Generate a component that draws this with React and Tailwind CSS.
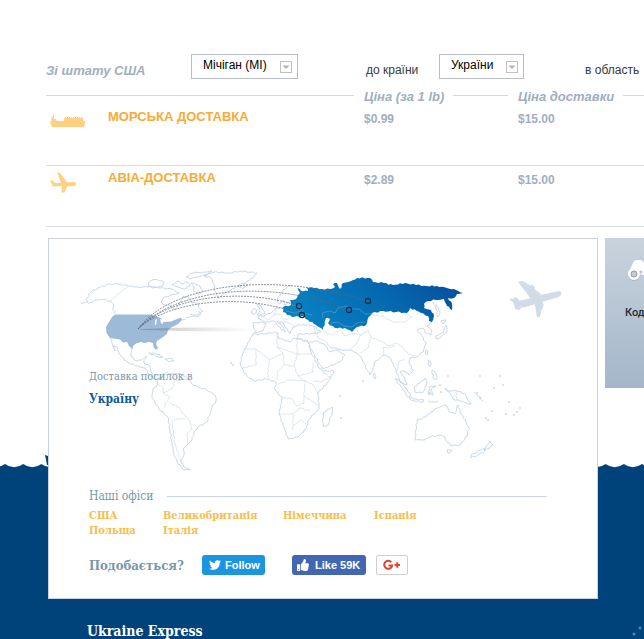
import React from "react";
import { FaTwitter, FaThumbsUp } from "react-icons/fa";

const SLAB = "font-['DejaVu_Serif_Condensed','DejaVu_Serif',serif]";

// Turns a rough list of x,y pairs into a slightly ragged coastline
function coast(str, amp = 1, close = true) {
  const n = str.trim().split(/[\s,]+/).map(Number);
  const pts = [];
  for (let i = 0; i < n.length; i += 2) pts.push([n[i], n[i + 1]]);
  if (close) pts.push(pts[0]);
  let d = `M${pts[0][0]} ${pts[0][1]}`;
  for (let i = 1; i < pts.length; i++) {
    const [ax, ay] = pts[i - 1];
    const [bx, by] = pts[i];
    const len = Math.hypot(bx - ax, by - ay) || 1;
    const steps = Math.max(1, Math.round(len / 2.5));
    for (let s = 1; s < steps; s++) {
      const t = s / steps;
      const off = Math.sin(ax * 12.9 + by * 7.3 + s * 2.4) * amp;
      const x = ax + (bx - ax) * t - ((by - ay) / len) * off;
      const y = ay + (by - ay) * t + ((bx - ax) / len) * off;
      d += `L${x.toFixed(1)} ${y.toFixed(1)}`;
    }
    d += `L${bx} ${by}`;
  }
  return d + (close ? "Z" : "");
}

// closed shores
const LAND = [
  // Greenland
  "214,272 230,273 240,271 257,273 253,278 247,281 243,285 235,288 225,293 218,298 215,291 214,284 211,278 204,276",
  // Arctic islands
  "148,283 152,280 158,280 164,282 163,286 155,287 149,286",
  "172,285 177,281 183,284 188,282 190,286 184,289 178,287",
  "186,277 193,273 204,272 212,271 206,275 197,277 190,279",
  "191,283 198,285 203,290 199,294 193,291 194,287",
  // Iceland
  "239,285 244,283 248,285 244,288 240,287",
  // Cuba, Hispaniola
  "149,353 155,353 163,357 158,357",
  "165,359 170,358 174,361 169,362",
  // South America
  "158,379 165,373 172,374 180,373 187,378 192,384 198,387 207,390 215,395 216,401 212,407 210,413 207,422 198,427 194,433 192,440 187,445 183,449 184,455 181,460 183,466 190,470 183,469 177,462 174,454 172,445 170,430 168,417 159,409 152,398 153,390 157,385",
  // Africa
  "253,334 263,334 277,332 278,338 290,342 295,338 308,342 311,352 318,366 322,371 334,371 329,381 318,393 319,409 309,419 306,429 298,437 288,439 285,430 279,414 282,398 275,390 276,382 267,379 253,381 244,373 240,363 243,353 246,347",
  "332,407 332,413 328,425 323,426 323,419 323,413",
  // Arabia
  "308,343 315,341 324,344 330,352 337,350 345,355 340,362 323,369 318,362 313,352",
  // Great Britain and Ireland
  "257,304 261,306 265,314 257,315 260,310",
  "252,310 256,309 256,313 252,314",
  // Iberia
  "253,323 260,322 266,324 263,331 255,333",
  // Sumatra, Java, Borneo, Sulawesi
  "395,379 399,380 406,388 411,396 408,397 402,388",
  "409,398 416,399 424,400 423,402 414,401",
  "414,387 420,383 425,378 427,383 425,389 422,393 415,392",
  "429,387 436,386 431,389 433,395 430,392 429,395",
  // Philippines, Taiwan
  "428,360 431,362 430,367 428,365",
  "432,370 436,374 437,379 433,378",
  "426,350 428,351 427,355 425,353",
  // New Guinea
  "445,388 449,391 455,390 465,394 467,399 471,404 466,403 460,401 453,399 451,395",
  // Australia
  "458,405 460,412 463,416 466,422 469,427 467,436 460,445 452,446 447,442 445,437 440,435 430,437 423,440 415,440 416,430 417,420 426,417 431,412 437,408 446,405 449,411 455,414",
  "447,450 452,450 450,453 448,453",
  // New Zealand
  "490,441 493,445 488,449 484,450",
  "484,448 485,451 478,455 471,458 471,455",
  // Japan
  "441,321 446,320 443,324",
  "446,325 447,331 441,337 436,339 436,336 443,333",
  "374,373 376,376 375,379 373,376",
];

// open shores
const SHORES = [
  "81,304 88,302 86,299 91,292 98,288 110,284 119,284 128,286 138,287 148,287 160,288 172,289 179,293 171,295 163,298 161,302 165,305 170,305 175,310 178,305 181,302 183,296 189,298 192,303 197,303 200,309 203,311 197,315 190,317 182,320",
  "88,304 94,301 101,299 110,301 114,305 113,308 115,314",
  "190,314 194,316 198,317 201,314 198,311",
  "110,338 112,343 115,351 113,346 117,347 120,355 128,363 138,366 146,369 150,376 156,380 160,378",
  "132,348 131,356 136,361 142,360 146,356 144,363 150,366 151,372 157,377",
  "292,285 287,287 282,292 278,297 277,302 280,304 284,300 284,305 290,302",
  "284,308 276,308 272,312 266,315 258,317 264,322 270,322 274,321 278,326 285,332 283,327 277,321 283,323 288,331 290,334 293,327 303,324 313,326 321,332 311,334 298,334 297,338 308,341",
  "330,347 337,349 345,350 353,351 357,353 362,359 366,368 370,375 373,370 374,363 384,355 389,357 393,363 396,371 401,382 407,385 405,379 400,372 404,371 409,375 413,370 409,362 410,358 417,357 423,352 426,344 422,336 417,330 423,328 425,332 431,335 432,331 427,326 432,322",
  "433,302 436,309 438,317 440,312 436,304",
  "474,392 478,396 483,401",
  "428,401 433,402 438,401",
];

// frontiers
const BORDERS = [
  "110,301 128,286",
  "157,384 163,388 163,393 170,397 166,402 164,408",
  "163,393 172,389 175,381 187,379",
  "170,403 178,407 183,413 189,420 192,428 187,433 188,445",
  "172,420 178,419 186,419",
  "172,421 175,445 182,464",
  "277,333 277,347 300,355",
  "297,338 297,354 311,354",
  "245,349 256,349 256,365 242,368",
  "256,349 270,360 283,353 277,347",
  "270,360 268,368 268,378",
  "283,353 284,365 277,372 277,380",
  "297,355 294,366 298,376 305,381",
  "284,365 294,366",
  "298,376 313,372 313,362",
  "278,384 290,380 305,381 304,396",
  "305,381 313,385 318,393",
  "322,372 330,377 321,382 313,381",
  "281,397 292,399 296,406 304,403 304,396 318,405",
  "279,414 293,414 293,430",
  "293,414 300,408 310,411",
  "293,426 301,420 306,424",
  "262,316 269,320 274,315 280,314 284,320 290,318",
  "274,315 276,309",
  "280,324 288,322 294,326",
  "313,326 318,338 325,341 330,347",
  "323,331 332,335 340,330",
  "340,330 345,336 353,333 361,335 356,344 350,350",
  "361,335 368,330 371,337 380,341 390,346 396,343 402,347 408,354 415,356",
  "371,337 368,348 360,353",
  "384,355 383,347 390,348 396,345",
  "397,371 399,362 405,359",
  "373,315 382,316 393,322 404,322 412,317 405,313",
  "367,320 357,328 358,332",
  "456,390 457,400",
];

const RUSSIA =
  "297,286 301,291 308,291 306,287 314,288 322,289 330,289 335,287 333,284 337,283 340,289 343,283 351,281 357,278 370,278 373,282 384,283 393,285 405,283 416,285 427,286 437,286 447,288 456,290 463,293 457,294 454,298 448,298 452,304 452,310 447,306 444,299 436,300 428,301 424,304 424,308 431,310 434,316 432,322 429,321 428,316 421,313 417,311 410,308 407,313 396,312 383,311 372,313 368,318 366,325 357,327 352,332 345,328 335,328 328,323 330,319 326,318 323,330 316,325 308,320 302,316 292,317 283,312 283,307 291,305 290,300 296,299 300,293";

const ROUTES = [
  "M138 329C170 285 270 270 368 301",
  "M138 329C170 293 260 275 349 310",
  "M138 329C165 300 235 285 299 306",
  "M138 329C165 303 240 290 302 315",
];

const ISLANDS = [
  [363, 381], [340, 396], [341, 418], [448, 376], [480, 376], [500, 376], [494, 388],
  [503, 385], [509, 402], [514, 415], [517, 412], [520, 408], [506, 414], [492, 411],
  [477, 393], [480, 398], [486, 418], [488, 420], [440, 385], [441, 392], [231, 363], [233, 365],
];

function WorldMap() {
  return (
    <svg viewBox="49 239 548 249" className="block w-full" fill="none" aria-hidden="true">
      <defs>
        <linearGradient id="east" x1="0" x2="1" y1="0.3" y2="0">
          <stop offset="0" stopColor="#0880c2" />
          <stop offset="0.45" stopColor="#066bb2" />
          <stop offset="1" stopColor="#044d98" />
        </linearGradient>
        <linearGradient id="shade" x1="0" x2="1" y1="0" y2="0">
          <stop offset="0" stopColor="#555" stopOpacity="0.4" />
          <stop offset="1" stopColor="#999" stopOpacity="0" />
        </linearGradient>
      </defs>

      <g stroke="#d3dfec" strokeWidth="0.8">
        {BORDERS.map((b) => (
          <path key={b} d={coast(b, 0.5, false)} />
        ))}
      </g>
      <g stroke="#bbcee2" strokeWidth="0.8" strokeLinejoin="round">
        {LAND.map((l) => (
          <path key={l} d={coast(l, 0.7)} />
        ))}
        {SHORES.map((s) => (
          <path key={s} d={coast(s, 0.7, false)} />
        ))}
      </g>
      <g fill="#b3c0cf">
        {ISLANDS.map(([x, y]) => (
          <circle key={`${x}-${y}`} cx={x} cy={y} r="0.8" />
        ))}
      </g>

      <path
        fill="#9dbad8"
        d="M115 314.500H151L156 316.500L161 318L163 322L171 321.500L176 319.500L181 317.500L182 320L178 324L172 327L168 330L167 334L163 337L157 341L156 344L158 348L156 350L153.500 347L153 343L149 342L144 343L141 342L136 343.500L133 346L132.500 349L129 346L127 342L123 342.500L120 339.500L110 338L106.500 333L106 327L109 322L112 317Z"
      />
      <path fill="#fff" d="M155 320l2-1-1 6-1 0zM160 319l3 1 0 4-2-1z" />

      <path fill="url(#east)" d={coast(RUSSIA, 0.7)} />
      <path
        stroke="#5aa5d6"
        strokeWidth="0.6"
        d="M323 318l-1-5 8-2 5 2 3-5 8-2 6 3 7 0 6 5 8 0M292 305l8 2 4 6 8 2M330 323l8-1 6 4 8 1 5-4 8-1M286 311l9 2 6-2"
      />

      <path fill="url(#shade)" d="M138 329.500C165 327 215 327 256 328V331C215 332 165 331 138 329.500Z" />
      <g stroke="#5f6972" strokeWidth="0.7" strokeDasharray="2 1">
        {ROUTES.map((r) => (
          <path key={r} d={r} />
        ))}
      </g>
      <g stroke="#0b2f4f" strokeWidth="1.200">
        <circle cx="368" cy="301" r="2.600" />
        <circle cx="349" cy="310" r="2.600" />
        <circle cx="299" cy="306" r="2.600" />
        <circle cx="302" cy="315" r="2.600" />
      </g>

      <path
        fill="#d0dde8"
        transform="translate(490 230) scale(0.3333)"
        d="M207 183Q216 184 214 193Q212 199 204 202L158 215L161 225L158 236L154 240L150 260L141 262L136 232L134 223L110 230L92 233L90 240L76 238L71 219L59 209L62 205L70 207L74 202L82 203L88 212L121 205L108 186L97 173L84 155L97 152L121 166L129 165L135 172L133 177L145 185L153 194Z"
      />
    </svg>
  );
}

function Select({ id, value, className }) {
  return (
    <div className={`relative h-[25px] shrink-0 ${className}`}>
      <select
        id={id}
        defaultValue={value}
        className="block h-full w-full appearance-none border border-[#b9bdc7] bg-white pb-1 pl-[11px] text-xs text-black"
      >
        <option>{value}</option>
      </select>
      <svg viewBox="0 0 12 12" className="pointer-events-none absolute top-[7px] right-[6px] size-3" aria-hidden="true">
        <rect x="0.500" y="0.500" width="11" height="11" fill="#fff" stroke="#c0c0c4" />
        <path d="M2.500 4.500h7L6 8z" fill="#b0b3ba" />
      </svg>
    </div>
  );
}

function ShipIcon() {
  return (
    <svg viewBox="0 0 36 13" className="h-[13px] w-9" fill="#fed080" aria-hidden="true">
      <path d="M0 7l1.500-1V2H3V0l1 1v3h2l.5 2H14V3h1V2h1v1h1V2h1v1h1V2h1v1h1V2h1v1h1V2h1v1h1V2h1v1h1V2h1v1h1V2h1v1h1V2h1v1h1v3h2v3l-1 3H2z" />
    </svg>
  );
}

function PlaneIcon() {
  return (
    <svg viewBox="0 0 26 21" className="h-[21px] w-[26px]" fill="#fed080" aria-hidden="true">
      <path d="M7 0l3 1 7 9.500 7-.5q2 0 2 2t-2 2l-7 .5-2.500 6h-3l.5-6.500-9 .5L0 8.500h3L5 11h6z" />
    </svg>
  );
}

const rates = [
  { name: "МОРСЬКА ДОСТАВКА", icon: <ShipIcon />, price: "$0.99", total: "$15.00" },
  { name: "АВІА-ДОСТАВКА", icon: <PlaneIcon />, price: "$2.89", total: "$15.00" },
];

function Rates() {
  return (
    <table className="mt-[6px] w-full table-fixed border-separate border-spacing-0 text-left text-xs font-bold text-[#9fafbf]">
      <thead>
        <tr className="h-5 text-[13px] leading-4 whitespace-nowrap italic">
          <th className="p-0" aria-label="Доставка">
            <div className="mr-[10px] h-px bg-[#cddae6]" />
          </th>
          <th className="w-[154px] p-0">
            <div className="flex h-5 items-center gap-[9px]">
              <span className="pt-1">Ціна (за 1 lb)</span>
              <span className="mr-[10px] h-px flex-1 bg-[#cddae6]" />
            </div>
          </th>
          <th className="w-[126px] p-0">
            <div className="flex h-5 items-center gap-[9px]">
              <span className="pt-1">Ціна доставки</span>
              <span className="h-px flex-1 bg-[#cddae6]" />
            </div>
          </th>
        </tr>
      </thead>
      <tbody>
        {rates.map((r) => (
          <tr key={r.name} className="h-[61px] align-top leading-4">
            <td className="border-b border-[#d3dde2] p-0 pt-1">
              <div className="flex h-6 items-start">
                <span className="flex h-6 w-[62px] shrink-0 items-center pl-1">{r.icon}</span>
                <a href="#" className="text-[13px] leading-4 font-bold text-[#f8ab35]">
                  {r.name}
                </a>
              </div>
            </td>
            <td className="border-b border-[#d3dde2] p-0 pt-[6px]">{r.price}</td>
            <td className="border-b border-[#d3dde2] p-0 pt-[6px]">{r.total}</td>
          </tr>
        ))}
      </tbody>
    </table>
  );
}

const offices = [
  { names: ["США", "Польща"], width: "w-[74px]" },
  { names: ["Великобританія", "Італія"], width: "w-[120px]" },
  { names: ["Німеччина"], width: "w-[91px]" },
  { names: ["Іспанія"], width: "w-[60px]" },
];

function OfficesCard() {
  return (
    <section className="min-w-0 flex-1 border border-[#c9d2de] bg-white pb-[23px]">
      <div className={`relative ${SLAB}`}>
        <WorldMap />
        <div className="absolute top-[130px] left-10">
          <p className="text-[11px] leading-4 text-[#7797a9]">Доставка посилок в</p>
          <p className="mt-[6px] text-[12px] leading-4 font-bold text-[#0a5ba0]">Україну</p>
        </div>
      </div>

      <div className="pr-[50px] pl-10">
        <div className="flex items-center gap-[14px]">
          <h2 className={`text-[12px] leading-4 text-[#7797a9] ${SLAB}`}>Наші офіси</h2>
          <span className="h-px flex-1 bg-[#c9d5e2]" />
        </div>

        <div className={`mt-1 flex text-[11px] leading-[15px] font-bold text-[#f8bd4e] ${SLAB}`}>
          {offices.map((col) => (
            <ul key={col.names[0]} className={`h-[30px] shrink-0 ${col.width}`}>
              {col.names.map((name) => (
                <li key={name}>
                  <a href="#">{name}</a>
                </li>
              ))}
            </ul>
          ))}
        </div>

        <div className="mt-[17px] flex h-5 items-center text-[11px] font-bold">
          <p className={`w-[113px] text-[13px] text-[#7797a9] ${SLAB}`}>Подобається?</p>
          <button className="flex h-5 w-[63px] items-center gap-1 rounded-[3px] bg-[#1b95e0] pl-[7px] text-white">
            <FaTwitter className="size-3" />
            Follow
          </button>
          <button className="ml-[27px] flex h-5 w-[74px] items-center gap-[6px] rounded-[3px] bg-[#4267b2] pl-[5px] whitespace-nowrap text-white">
            <FaThumbsUp className="size-3" />
            Like 59K
          </button>
          <button
            aria-label="Google+"
            className="ml-[10px] flex h-5 w-8 items-center justify-center rounded-[2px] border border-[#cfcfcf] bg-white"
          >
            <svg viewBox="0 0 18 12" className="h-3 w-[18px]" fill="none" stroke="#db4437" strokeWidth="2" aria-hidden="true">
              <path d="M8.300 3.200A4 4 0 1 0 9.200 6.500H5.500M11.500 6H17M14.250 3.250V8.750" />
            </svg>
          </button>
        </div>
      </div>
    </section>
  );
}

function TrackPanel() {
  return (
    <aside className="h-[150px] w-[39px] shrink-0 overflow-hidden bg-linear-to-b from-[#c9d3dd] to-[#a4b6ca] pl-5">
      <svg viewBox="0 0 38 24" className="mt-[20px] ml-[3px] h-6 w-[38px] max-w-none" aria-hidden="true">
        <g fill="#aab8c6" transform="translate(0 1)">
          <circle cx="6" cy="16" r="6" />
          <circle cx="29" cy="16" r="6" />
        </g>
        <g fill="#fff">
          <path d="M0 16L5 5Q6 2 9 2H13Q16 3 16 6H19Q19 3 22 2H26Q29 2 30 5L35 16H23L20 17H15L12 16Z" />
          <circle cx="6" cy="16" r="6" />
          <circle cx="29" cy="16" r="6" />
        </g>
        <circle cx="6" cy="16" r="3" fill="#c0cbd6" stroke="#8d9cab" />
        <circle cx="29" cy="16" r="3" fill="#c0cbd6" stroke="#8d9cab" />
        <circle cx="13" cy="14" r="1.500" fill="#b5c2cf" />
      </svg>
      <p className="mt-[23px] font-['Roboto',sans-serif] text-[11px] leading-4 font-medium whitespace-nowrap text-[#272d33]">
        Код
      </p>
    </aside>
  );
}

function Sea() {
  return (
    <div className="col-start-1 row-start-1 mt-[217px] flex flex-col" aria-hidden="true">
      <svg className="block h-[13px] w-full">
        <defs>
          <pattern id="wave" x="5" y="9" width="18.200" height="4" patternUnits="userSpaceOnUse">
            <path d="M0 0Q9.100 6.500 18.200 0V4H0Z" fill="#00427a" />
          </pattern>
        </defs>
        <rect y="9" width="100%" height="4" fill="url(#wave)" />
        <path d="M45 0l3 1v9h-1z" fill="#00427a" />
      </svg>
      <div className="flex flex-1 items-end justify-end bg-[#00427a]">
        <svg viewBox="0 0 12 14" className="h-[14px] w-3" fill="#4d86b5">
          <circle cx="2" cy="9" r="1.500" />
          <circle cx="8" cy="3" r="1.500" />
        </svg>
      </div>
    </div>
  );
}

export default function App() {
  return (
    <div className="flex min-h-screen flex-col overflow-hidden bg-white font-['Liberation_Sans',Arial,sans-serif]">
      <header className="pt-[54px] pl-[46px]">
        <form className="flex items-center text-xs whitespace-nowrap text-[#333a42]">
          <label htmlFor="state" className="w-[145px] shrink-0 pt-2 text-[13px] font-bold text-[#9fafbf] italic">
            Зі штату США
          </label>
          <Select id="state" value="Мічіган (MI)" className="w-[107px]" />
          <label htmlFor="country" className="ml-[68px] w-[73px] shrink-0 pt-[6px]">
            до країни
          </label>
          <Select id="country" value="України" className="w-[85px]" />
          <span className="ml-[61px] pt-[6px]">в область</span>
        </form>
        <Rates />
      </header>

      <div className="mt-[11px] grid flex-1">
        <Sea />
        <div className="col-start-1 row-start-1">
          <main className="flex items-start gap-[7px] pl-12">
            <OfficesCard />
            <TrackPanel />
          </main>
          <footer className={`mt-6 pl-[87px] text-[14px] leading-4 font-bold text-white ${SLAB}`}>Ukraine Express</footer>
        </div>
      </div>
    </div>
  );
}
